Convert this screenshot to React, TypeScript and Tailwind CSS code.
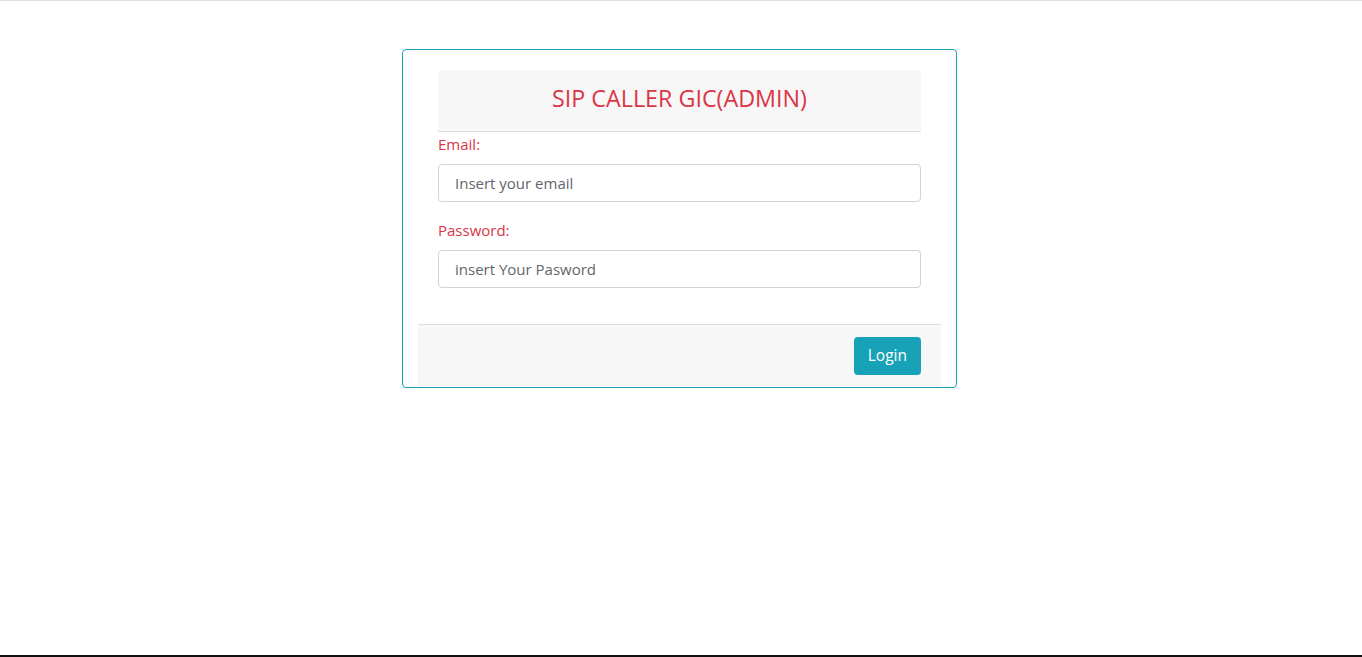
export default function App() {
  return (
    <div
      className="relative h-[657px] w-full overflow-hidden bg-white border-t border-[#dedede]"
      style={{ fontFamily: '"Open Sans", "Noto Sans", sans-serif' }}
    >
      <div className="flex justify-center pt-[48px] pr-[3px]">
        <div className="w-[555px] rounded border border-[#17a2b8] px-[15px] pt-[20px]">
          <div className="px-[20px]">
            <div className="flex h-[62px] items-center justify-center rounded-t border-b border-[#dddddd] bg-[#f7f7f7] pb-[4px]">
              <h1 className="text-[23.3px] text-[#dc3545]">SIP CALLER GIC(ADMIN)</h1>
            </div>
            <label className="mt-[1px] block text-[15px] leading-[22px] text-[#dc3545]">Email:</label>
            <input
              className="mt-[9px] block h-[38px] w-full rounded border border-[#ced4da] px-[16px] text-[15px] text-[#495057] placeholder:text-[#5f666d] outline-none"
              placeholder="Insert your email"
            />
            <label className="mt-[17px] block text-[15px] leading-[22px] text-[#dc3545]">Password:</label>
            <input
              type="password"
              className="mt-[9px] block h-[38px] w-full rounded border border-[#ced4da] px-[16px] text-[15px] text-[#495057] placeholder:text-[#5f666d] outline-none"
              placeholder="insert Your Pasword"
            />
          </div>
          <div className="mt-[36px] flex h-[63px] items-center justify-end border-t border-[#dddddd] bg-[#f7f7f7] px-[20px]">
            <button className="h-[38px] rounded bg-[#17a2b8] px-[14px] text-[15.5px] text-white">Login</button>
          </div>
        </div>
      </div>
      <div className="absolute bottom-0 left-0 h-[2px] w-full bg-[#111111]" />
    </div>
  );
}
